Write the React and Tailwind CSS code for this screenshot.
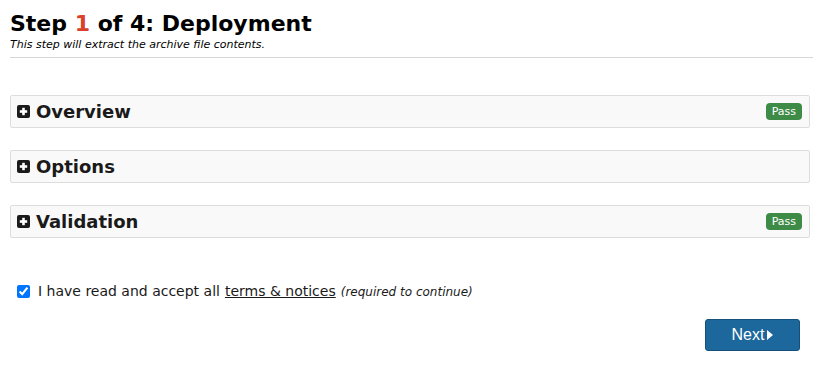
import React, { useState } from 'react'

const font = { fontFamily: '"DejaVu Sans", Verdana, sans-serif' }

function Panel({ title, pass }) {
  return (
    <div className="flex items-center h-[33px] px-[6px] bg-[#f9f9f9] border border-[#dddddd] rounded-[2px]">
      <span className="w-[13px] h-[13px] bg-[#1a1a1a] rounded-[2px] flex items-center justify-center mr-[6px]">
        <svg width="9" height="9" viewBox="0 0 9 9">
          <rect x="3.2" y="0.8" width="2.6" height="7.4" fill="#fff" />
          <rect x="0.8" y="3.2" width="7.4" height="2.6" fill="#fff" />
        </svg>
      </span>
      <span className="font-bold text-[18px] text-[#1a1a1a]">{title}</span>
      {pass && (
        <span className="ml-auto mr-[1px] bg-[#3e8a47] text-white text-[11px] leading-none px-[6px] py-[3px] rounded-[4px]">
          Pass
        </span>
      )}
    </div>
  )
}

export default function App() {
  const [accepted, setAccepted] = useState(true)

  return (
    <div className="w-[823px] h-[368px] bg-white px-[10px] pt-[10px] text-black" style={font}>
      <div className="border-b border-[#d6d6d6] pb-[6px]">
        <h1 className="font-bold text-[22px] leading-[28px]">
          Step <span className="text-[#d9412b]">1</span> of 4: Deployment
        </h1>
        <div className="italic text-[11px] leading-[13px]">This step will extract the archive file contents.</div>
      </div>

      <div className="flex flex-col gap-[22px] mt-[37px] pr-[3px]">
        <Panel title="Overview" pass />
        <Panel title="Options" />
        <Panel title="Validation" pass />
      </div>

      <div className="flex items-center mt-[43px] pl-[7px] text-[14px] text-[#1a1a1a]">
        <input
          type="checkbox"
          checked={accepted}
          onChange={e => setAccepted(e.target.checked)}
          className="w-[13px] h-[13px] mr-[8px] accent-[#0075ff]"
        />
        <span>I have read and accept all </span>
        <a href="#" className="underline ml-[5px]">terms &amp; notices</a>
        <span className="italic text-[12px] ml-[5px]">(required to continue)</span>
      </div>

      <div className="flex justify-end mt-[17px] pr-[13px]">
        <button
          className="w-[95px] h-[32px] bg-[#1c679c] border border-[#14507a] rounded-[3px] text-white text-[16px] flex items-center justify-center gap-[3px]"
          style={{ fontFamily: '"Liberation Sans", Arial, sans-serif' }}
        >
          Next
          <svg width="6" height="10" viewBox="0 0 6 10"><path d="M0 0 L6 5 L0 10 Z" fill="#fff" /></svg>
        </button>
      </div>
    </div>
  )
}
